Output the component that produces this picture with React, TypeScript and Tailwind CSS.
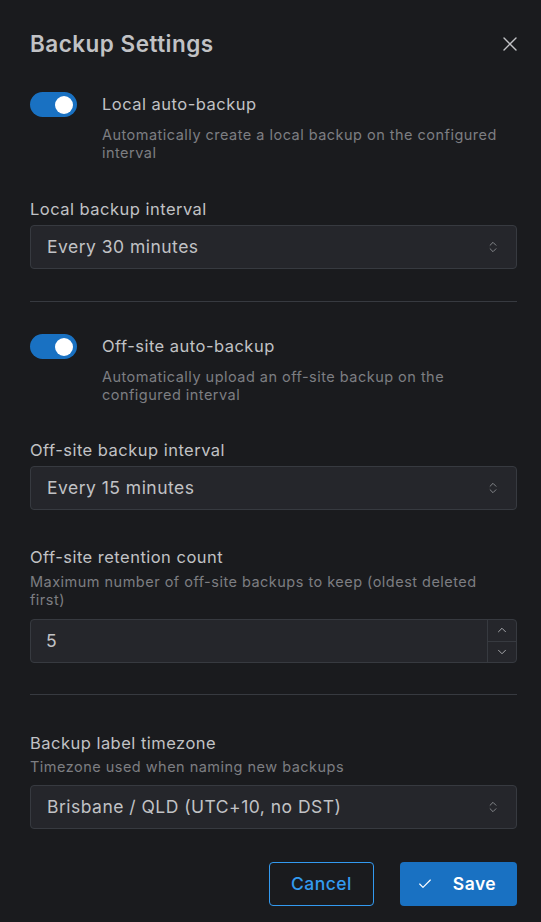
import { X, Check, ChevronUp, ChevronDown, ChevronsUpDown } from "lucide-react";

const font = { fontFamily: "Inter, 'Noto Sans', sans-serif", letterSpacing: "0.03em" };

function Toggle() {
  return (
    <div className="flex h-[25px] w-[47px] shrink-0 items-center justify-end rounded-full bg-[#1971c2] pr-[4px]">
      <div className="h-[18px] w-[18px] rounded-full bg-white" />
    </div>
  );
}

function SwitchRow({ label, desc }: { label: string; desc: string }) {
  return (
    <div className="flex gap-[25px]">
      <Toggle />
      <div className="flex flex-col">
        <span className="text-[16.5px] leading-[25px] text-[#c1c2c5]">{label}</span>
        <span className="mt-[9px] text-[14.5px] leading-[18px] text-[#7d7e82]">{desc}</span>
      </div>
    </div>
  );
}

function Select({ value }: { value: string }) {
  return (
    <div className="flex h-[44px] items-center justify-between rounded-[4px] border border-[#373a40] bg-[#25262b] pl-[16px] pr-[16px]">
      <span className="text-[17.5px] text-[#c1c2c5]">{value}</span>
      <ChevronsUpDown size={14} className="text-[#909296]" strokeWidth={1.5} />
    </div>
  );
}

export default function App() {
  return (
    <div className="min-h-[922px] w-[541px] bg-[#1a1b1e] pl-[30px] pr-[24px] pt-[30px]" style={font}>
      <div className="flex items-center justify-between">
        <h2 className="text-[22.5px] font-semibold leading-[28px] text-[#c1c2c5]">Backup Settings</h2>
        <X size={24} className="mr-[-5px] text-[#c1c2c5]" strokeWidth={1.4} />
      </div>

      <div className="mt-[34px]">
        <SwitchRow label="Local auto-backup" desc="Automatically create a local backup on the configured interval" />
      </div>

      <div className="mt-[36px] flex flex-col gap-[5px]">
        <span className="text-[16.5px] leading-[22px] text-[#c1c2c5]">Local backup interval</span>
        <Select value="Every 30 minutes" />
      </div>

      <div className="mb-[32px] mt-[32px] h-px bg-[#373a40]" />

      <SwitchRow label="Off-site auto-backup" desc="Automatically upload an off-site backup on the configured interval" />

      <div className="mt-[35px] flex flex-col gap-[5px]">
        <span className="text-[16.5px] leading-[22px] text-[#c1c2c5]">Off-site backup interval</span>
        <Select value="Every 15 minutes" />
      </div>

      <div className="mt-[36px] flex flex-col">
        <span className="text-[16.5px] leading-[22px] text-[#c1c2c5]">Off-site retention count</span>
        <span className="mt-[5px] max-w-[470px] text-[14.5px] leading-[18px] text-[#7d7e82]">
          Maximum number of off-site backups to keep (oldest deleted first)
        </span>
        <div className="mt-[10px] flex h-[44px] items-stretch rounded-[4px] border border-[#373a40] bg-[#25262b]">
          <span className="flex flex-1 items-center pl-[15px] text-[17.5px] text-[#c1c2c5]">5</span>
          <div className="flex w-[29px] flex-col border-l border-[#373a40]">
            <div className="flex flex-1 items-center justify-center border-b border-[#373a40]">
              <ChevronUp size={14} className="text-[#c1c2c5]" strokeWidth={1.4} />
            </div>
            <div className="flex flex-1 items-center justify-center">
              <ChevronDown size={14} className="text-[#c1c2c5]" strokeWidth={1.4} />
            </div>
          </div>
        </div>
      </div>

      <div className="mt-[31px] h-px bg-[#373a40]" />

      <div className="mt-[37px] flex flex-col">
        <span className="text-[16.5px] leading-[22px] text-[#c1c2c5]">Backup label timezone</span>
        <span className="mt-[4px] text-[14.5px] leading-[18px] text-[#7d7e82]">Timezone used when naming new backups</span>
        <div className="mt-[9px]">
          <Select value="Brisbane / QLD (UTC+10, no DST)" />
        </div>
      </div>

      <div className="mt-[33px] flex justify-end gap-[26px]">
        <button className="h-[44px] w-[105px] rounded-[4px] border border-[#339af0] text-[17.5px] font-medium text-[#339af0]">
          Cancel
        </button>
        <button className="flex h-[44px] w-[117px] items-center justify-center gap-[20px] rounded-[4px] bg-[#1971c2] pr-[4px] text-[17.5px] font-semibold text-white">
          <Check size={16} strokeWidth={1.75} />
          Save
        </button>
      </div>
    </div>
  );
}
